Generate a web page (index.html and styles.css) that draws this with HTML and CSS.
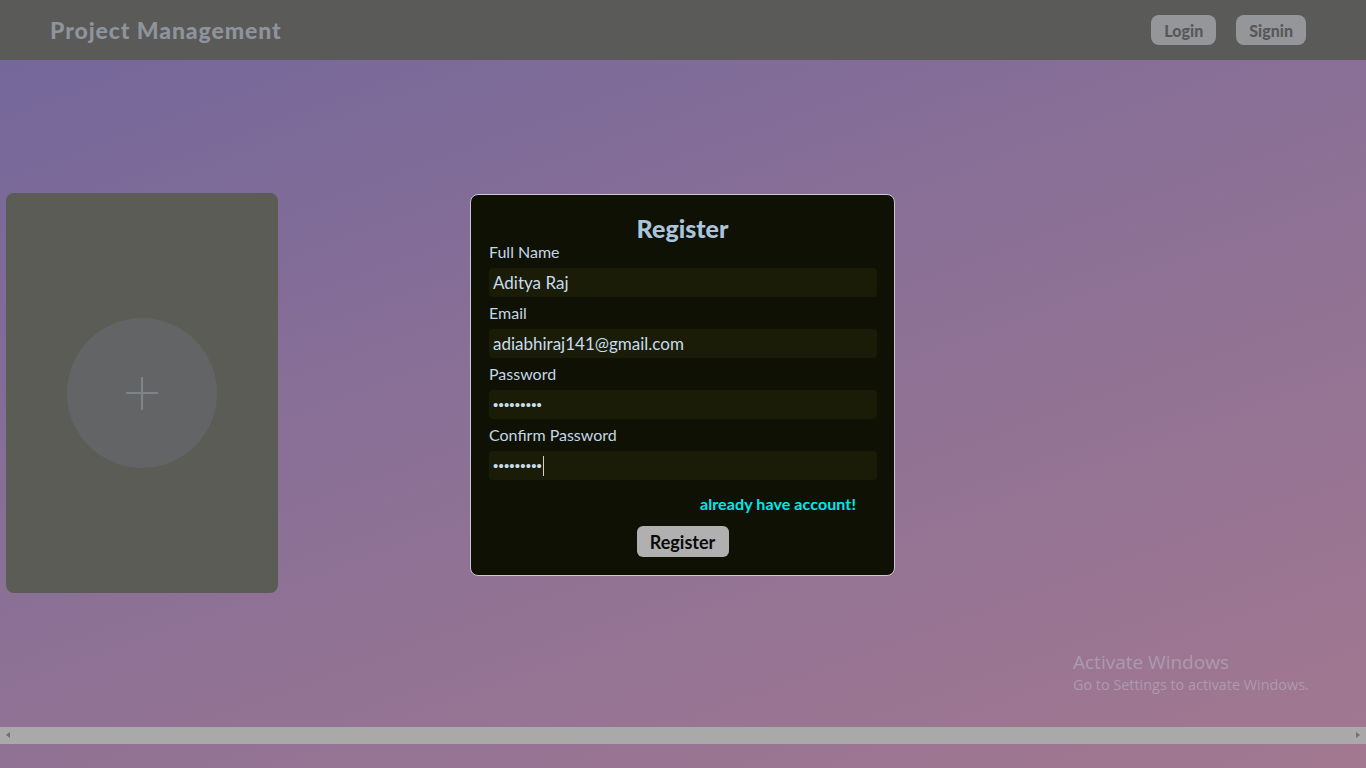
FILE: index.html
```html
<!DOCTYPE html>
<html lang="en">
<head>
<meta charset="utf-8">
<title>Project Management</title>
<link rel="stylesheet" href="styles.css">
</head>
<body>
<div class="page">
  <header class="navbar">
    <div class="logo">Project Management</div>
    <nav class="nav-actions">
      <button class="nav-btn">Login</button>
      <button class="nav-btn">Signin</button>
    </nav>
  </header>
  <main class="main">
    <div class="add-card">
      <div class="add-circle">
        <svg width="34" height="34" viewBox="0 0 34 34"><path d="M17 1v33M1 17h32" stroke="#7f8387" stroke-width="2.2" fill="none"/></svg>
      </div>
    </div>
    <form class="modal">
      <h2 class="modal-title">Register</h2>
      <label class="field-label">Full Name</label>
      <input class="field-input" type="text" value="Aditya Raj">
      <label class="field-label">Email</label>
      <input class="field-input" type="text" value="adiabhiraj141@gmail.com">
      <label class="field-label">Password</label>
      <input class="field-input pass" type="password" value="123456789">
      <label class="field-label">Confirm Password</label>
      <div class="caret-wrap">
        <input class="field-input pass" type="password" value="123456789">
        <span class="caret"></span>
      </div>
      <div class="link-row"><a class="account-link">already have account!</a></div>
      <div class="btn-row"><button type="button" class="register-btn">Register</button></div>
    </form>
    <div class="watermark">
      <div class="wm-title">Activate Windows</div>
      <div class="wm-sub">Go to Settings to activate Windows.</div>
    </div>
  </main>
  <div class="hscroll">
    <span class="arrow arrow-left"></span>
    <span class="arrow arrow-right"></span>
  </div>
</div>
</body>
</html>
```
FILE: styles.css
```css
* { box-sizing: border-box; }
html, body { margin: 0; padding: 0; }
body {
  width: 1366px;
  height: 768px;
  overflow: hidden;
  font-family: Lato, "Open Sans", sans-serif;
  background: linear-gradient(160deg, #72669b 0%, #8a7096 45%, #a27890 100%);
}
.page { display: flex; flex-direction: column; height: 768px; }
.navbar {
  height: 60px;
  background: #5a5a58;
  display: flex;
  align-items: center;
  justify-content: space-between;
  padding: 0 60px 0 50px;
  flex: none;
}
.logo {
  font-size: 23px;
  font-weight: 900;
  color: #8e949c;
  letter-spacing: 0.9px;
}
.nav-actions { display: flex; gap: 20px; }
.nav-btn {
  height: 30px;
  padding: 0 13px;
  border: none;
  border-radius: 8px;
  background: #94969a;
  color: #585858;
  font-family: inherit;
  font-size: 16px;
  font-weight: 900;
}
.main {
  position: relative;
  height: 667px;
  flex: none;
  display: flex;
  align-items: flex-start;
}
.add-card {
  margin: 133px 0 0 6px;
  width: 272px;
  height: 400px;
  background: #5c5c56;
  border-radius: 8px;
  display: flex;
  align-items: center;
  justify-content: center;
}
.add-circle {
  width: 150px;
  height: 150px;
  border-radius: 50%;
  background: #636466;
  display: flex;
  align-items: center;
  justify-content: center;
}
.modal {
  margin: 134px 0 0 192px;
  width: 425px;
  background: #0f1104;
  border: 1px solid #c9c9d0;
  border-radius: 8px;
  padding: 19px 18px 18px;
  display: flex;
  flex-direction: column;
}
.modal-title {
  margin: 0;
  text-align: center;
  font-size: 25px;
  line-height: 28px;
  font-weight: 900;
  color: #a9c4dc;
}
.field-label {
  font-size: 16px;
  line-height: 20px;
  color: #c4d6e6;
  margin-bottom: 6px;
}
.field-input {
  width: 388px;
  height: 29px;
  border: none;
  outline: none;
  border-radius: 4px;
  background: #1a1c08;
  color: #c8dcec;
  font-family: inherit;
  font-size: 17px;
  padding: 0 4px;
  margin-bottom: 6px;
  display: block;
}
.field-input.pass {
  font-family: "Liberation Sans", sans-serif;
  font-size: 15px;
  letter-spacing: 0.2px;
}
.caret-wrap { position: relative; }
.caret {
  position: absolute;
  left: 54px;
  top: 5px;
  width: 1px;
  height: 20px;
  background: #d0d0d0;
}
.link-row {
  display: flex;
  justify-content: flex-end;
  padding-right: 20px;
  margin-top: 8px;
}
.account-link {
  font-size: 16px;
  line-height: 20px;
  color: #00e6f0;
  font-weight: 700;
  letter-spacing: 0.1px;
}
.btn-row { display: flex; justify-content: center; margin-top: 12px; }
.register-btn {
  width: 92px;
  height: 31px;
  border: none;
  border-radius: 6px;
  background: #b0b0b0;
  color: #0a0a0a;
  font-family: inherit;
  font-size: 18px;
  font-weight: 700;
  padding: 0;
}
.watermark {
  position: absolute;
  left: 1073px;
  top: 590px;
  font-family: "Open Sans", "Noto Sans", sans-serif;
  color: #ad9aae;
}
.wm-title { font-size: 19px; line-height: 25px; }
.wm-sub { font-size: 14.4px; line-height: 20px; }
.hscroll {
  height: 17px;
  background: #a9a9a9;
  position: relative;
  flex: none;
}
.arrow {
  position: absolute;
  top: 5px;
  width: 0;
  height: 0;
  border-top: 3.5px solid transparent;
  border-bottom: 3.5px solid transparent;
}
.arrow-left { left: 6px; border-right: 4px solid #707070; }
.arrow-right { right: 6px; border-left: 4px solid #707070; }
```
